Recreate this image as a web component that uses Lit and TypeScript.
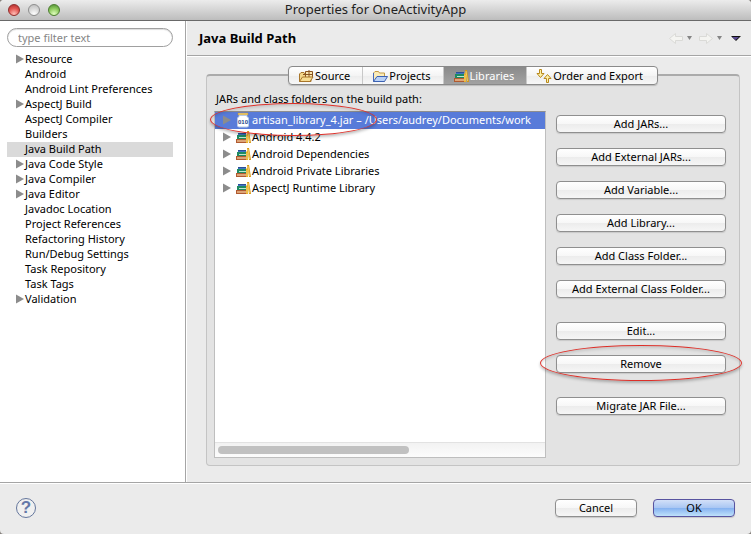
import { LitElement, html, css, svg, nothing } from "lit";
import { customElement, state } from "lit/decorators.js";
import { classMap } from "lit/directives/class-map.js";

const booksIcon = svg`
  <svg class="icon" viewBox="0 0 16 16" width="16" height="16" aria-hidden="true">
    <path d="M3 4h8v2H3z" fill="#3f74c4"/><path d="M3 4h8v1H3z" fill="#2b4f96"/>
    <path d="M2 6h9v4H2z" fill="#1f8a62"/><path d="M4 8h7v1H4z" fill="#bfe6cf"/>
    <path d="M1 10h11v4H1z" fill="#b05a30"/><path d="M2 11h9v2H2z" fill="#dca477"/>
    <path d="M12 2h2l2 12h-2z" fill="#d8980f"/>
    <path d="M11 6l2-2v10h-2z" fill="#e8b02a"/>
    <path d="M13 3l1.500 10M12 7v6" stroke="#fbe08a" stroke-width=".7" fill="none"/>
  </svg>`;

const jarIcon = svg`
  <svg class="icon" viewBox="0 0 16 16" width="16" height="16" aria-hidden="true">
    <path d="M3 1h10v2H3z" fill="#f0cf74" stroke="#b88a28" stroke-width=".5"/>
    <path d="M4 3.500h8v1l1.500 1.500v8l-1 1h-9l-1-1V6L4 4.500z" fill="#fff" stroke="#b9cbe6"/>
    <text x="8" y="12" text-anchor="middle" class="bits">010</text>
  </svg>`;

const sourceIcon = svg`
  <svg class="icon" viewBox="0 0 16 16" width="16" height="16" aria-hidden="true">
    <path d="M1.500 13.500V6l1.500-1.500h3L7 6h6v7.500z" fill="#f3d68b" stroke="#a8752a"/>
    <path d="M7.500 3.500h7v6h-7z" fill="#fbe7b0" stroke="#8a5420"/>
    <path d="M5 6.500h10M11 2v7" stroke="#8a5420" fill="none"/>
    <path d="M1.500 13.500L4.500 9h10.500l-3 4.500z" fill="#f7dc92" stroke="#a8752a"/>
  </svg>`;

const projectsIcon = svg`
  <svg class="icon" viewBox="0 0 16 16" width="16" height="16" aria-hidden="true">
    <path d="M1.500 13.500V5L3 3.500h3.500L7.500 5h5v8.500z" fill="#fbecb8" stroke="#c39a45"/>
    <path d="M1.500 13.500V5" stroke="#4568b8"/>
    <path d="M1.500 13.500L5 8.500h10.500l-3 5z" fill="#b9d1f5" stroke="#3c62b4"/>
  </svg>`;

const orderIcon = svg`
  <svg class="icon" viewBox="0 0 16 16" width="16" height="16" aria-hidden="true">
    <path d="M3.500 1.500h2v4h2.500L4.500 9.500 1 5.500h2.500z" fill="#fdf0a8" stroke="#b8891c"/>
    <path d="M12.500 14.500h-2v-4H8l3.500-4 3.500 4h-2.500z" fill="#fdf0a8" stroke="#b8891c"/>
  </svg>`;

const twisty = svg`
  <svg class="twisty" viewBox="0 0 8 10" width="8" height="10" aria-hidden="true">
    <path d="M0 0.500L8 5 0 9.500z" fill="#8c8c8c"/>
  </svg>`;

const categories: Array<[string, boolean]> = [
  ["Resource", true],
  ["Android", false],
  ["Android Lint Preferences", false],
  ["AspectJ Build", true],
  ["AspectJ Compiler", false],
  ["Builders", false],
  ["Java Build Path", false],
  ["Java Code Style", true],
  ["Java Compiler", true],
  ["Java Editor", true],
  ["Javadoc Location", false],
  ["Project References", false],
  ["Refactoring History", false],
  ["Run/Debug Settings", false],
  ["Task Repository", false],
  ["Task Tags", false],
  ["Validation", true],
];

const tabs = [
  { name: "Source", icon: sourceIcon },
  { name: "Projects", icon: projectsIcon },
  { name: "Libraries", icon: booksIcon },
  { name: "Order and Export", icon: orderIcon },
];

const entries = [
  { name: "artisan_library_4.jar – /Users/audrey/Documents/work", icon: jarIcon },
  { name: "Android 4.4.2", icon: booksIcon },
  { name: "Android Dependencies", icon: booksIcon },
  { name: "Android Private Libraries", icon: booksIcon },
  { name: "AspectJ Runtime Library", icon: booksIcon },
];

const actionGroups = [
  ["Add JARs...", "Add External JARs...", "Add Variable...", "Add Library...", "Add Class Folder...", "Add External Class Folder..."],
  ["Edit...", "Remove"],
  ["Migrate JAR File..."],
];

@customElement("app-root")
export class AppRoot extends LitElement {
  @state() private category = "Java Build Path";
  @state() private tab = "Libraries";
  @state() private entry = 0;

  static styles = css`
    :host {
      display: block;
      background: #85807c;
      font: 11px/15px "Noto Sans", "Open Sans", sans-serif;
      color: #000;
    }
    * { box-sizing: border-box; }
    button, input { font: inherit; color: inherit; margin: 0; padding: 0; }
    svg { display: block; flex: none; }
    ul { list-style: none; margin: 0; padding: 0; }

    .window {
      display: flex;
      flex-direction: column;
      min-height: 100vh;
      background: #ebebeb;
      border-radius: 4px;
      overflow: hidden;
    }
    .titlebar {
      display: grid;
      grid-template-columns: 1fr auto 1fr;
      align-items: center;
      height: 21px;
      padding: 0 8px;
      background: linear-gradient(#ececec, #bdbdbd);
      border-bottom: 1px solid #696969;
    }
    .lights { display: flex; gap: 8px; }
    .light {
      width: 12px;
      height: 12px;
      border: 1px solid #8d8d8d;
      border-radius: 50%;
      background: radial-gradient(circle at 50% 90%, #fff, #d4d4d4 60%, #bbb);
    }
    .light.close { border-color: #8f2d2b; background: radial-gradient(circle at 50% 90%, #ffc0b8, #e25550 55%, #a92b2b); }
    .light.zoom { border-color: #4b7c2f; background: radial-gradient(circle at 50% 90%, #e2ffc0, #8cc95c 55%, #4c8a33); }
    .title { margin: 0; padding-bottom: 2px; font-size: 13px; line-height: 18px; font-weight: 400; color: #222; }

    .body { display: flex; flex: 1; border-bottom: 1px solid #a5a5a5; }
    .sidebar {
      flex: none;
      width: 186px;
      padding: 7px 12px 0 7px;
      background: #fff;
      border-right: 1px solid #a5a5a5;
    }
    .filter {
      display: block;
      width: 100%;
      height: 19px;
      padding: 0 10px;
      border: 1px solid #a0a0a0;
      border-radius: 10px;
      background: #fff;
      box-shadow: inset 0 1px 1px #ddd;
    }
    .filter::placeholder { color: #858585; opacity: 1; }
    .categories { margin-top: 5px; }
    .category {
      display: flex;
      align-items: center;
      height: 15px;
      padding: 0 0 2px 9px;
      line-height: 13px;
      white-space: nowrap;
    }
    .category.selected { background: #dadada; }
    .slot { flex: none; width: 9px; }

    .page { flex: 1; min-width: 0; display: flex; flex-direction: column; border-left: 1px solid #fff; }
    .pagehead {
      display: flex;
      align-items: center;
      justify-content: space-between;
      height: 35px;
      padding: 0 10px 0 12px;
      border-bottom: 1px solid #a5a5a5;
      box-shadow: 0 1px #fff;
    }
    .pagehead h2 { margin: 0; font-size: 13px; line-height: 18px; font-weight: 700; padding-bottom: 1px; }
    .nav { display: flex; align-items: center; }
    .navbtn { display: flex; align-items: center; gap: 4px; border: 0; background: none; margin-right: 7px; }
    .navbtn.menu { margin: 0 0 0 2px; }

    .panel {
      flex: 1;
      display: flex;
      flex-direction: column;
      margin: 18px 11px 16px 19px;
      border: 1px solid #c4c4c4;
      border-top: 2px solid #ababab;
      border-radius: 4px;
      background: #e3e3e3;
      padding: 0 13px 7px 7px;
    }
    .tabs {
      align-self: center;
      display: flex;
      height: 19px;
      margin: -10px 0 0 6px;
      border: 1px solid #8a8a8a;
      border-radius: 4px;
      background: linear-gradient(#fff, #f4f4f4 50%, #ececec 51%, #f8f8f8);
      box-shadow: 0 1px 1px #bbb;
    }
    .tab {
      display: flex;
      align-items: center;
      gap: 1px;
      padding: 0 12px 0 9px;
      border: 0;
      background: none;
      line-height: 13px;
      white-space: nowrap;
    }
    .tab span { padding-bottom: 1px; }
    .tab:last-child { padding-right: 14px; }
    .tab + .tab { border-left: 1px solid #c8c8c8; }
    .tab.selected {
      background: linear-gradient(#8a8a8a, #a2a2a2);
      color: #fff;
    }

    .columns { flex: 1; display: flex; gap: 10px; margin-top: 7px; }
    .listside { flex: 1; min-width: 0; display: flex; flex-direction: column; }
    .label { line-height: 13px; height: 19px; padding-left: 2px; }
    .listwrap { flex: 1; position: relative; display: flex; flex-direction: column; }
    .list {
      flex: 1;
      display: flex;
      flex-direction: column;
      overflow: hidden;
      background: #fff;
      border: 1px solid #bebebe;
      border-top-color: #8e8e8e;
    }
    .entries { flex: 1; }
    .entry {
      display: flex;
      align-items: center;
      height: 17px;
      padding: 0 0 2px 8px;
      white-space: nowrap;
    }
    .entry .twisty { margin-right: 4px; }
    .entry .icon { margin-right: 1px; }
    .entry.selected { background: #587bd9; color: #fff; }
    .bits { font: 700 6px "Liberation Sans", sans-serif; fill: #1d3f86; }
    .track {
      height: 15px;
      padding: 3px;
      border-top: 1px solid #e2e2e2;
      background: linear-gradient(#f2f2f2, #fcfcfc);
    }
    .thumb { width: 59%; height: 8px; border-radius: 4px; background: #c1c1c1; }

    .actions {
      flex: none;
      width: 170px;
      display: flex;
      flex-direction: column;
      gap: 24px;
      padding-top: 23px;
    }
    .group { display: flex; flex-direction: column; gap: 15px; }
    .cell { position: relative; display: flex; }
    .push {
      flex: 1;
      height: 18px;
      border: 1px solid #8f8f8f;
      border-radius: 4px;
      background: linear-gradient(#fff, #f7f7f7 50%, #ececec 51%, #f6f6f6);
      box-shadow: 0 1px 1px #c8c8c8;
      line-height: 15px;
      padding-bottom: 1px;
      text-align: center;
      white-space: nowrap;
    }
    .push.primary {
      border-color: #5854a0;
      background: linear-gradient(#d3e0f8, #a9c6f3 49%, #85b1f0 51%, #bfe2fb);
    }
    .mark {
      position: absolute;
      border: 1px solid #dc2f28;
      border-radius: 50%;
      box-shadow: 0 2px 3px rgba(0, 0, 0, 0.25), inset 0 2px 3px rgba(0, 0, 0, 0.12);
      pointer-events: none;
    }
    .mark.first { left: -4px; top: -8px; width: 167px; height: 33px; }
    .mark.remove { left: -16px; right: -16px; top: -10px; bottom: -8px; }

    .footer {
      display: flex;
      align-items: center;
      gap: 16px;
      height: 51px;
      padding: 0 16px 2px;
      border-top: 1px solid #fff;
    }
    .help {
      width: 20px;
      height: 20px;
      margin-right: auto;
      border: 1px solid #64769c;
      border-radius: 50%;
      background: #f0f0f0;
      color: #6478a8;
      font: 700 17px/18px "Liberation Sans", sans-serif;
      text-align: center;
    }
    .footer .push { flex: none; width: 82px; }
  `;

  private arrow(forward: boolean) {
    const d = forward
      ? "M.5 4.500h7v-3l6 5-6 5v-3h-7z"
      : "M13.500 4.500h-7v-3l-6 5 6 5v-3h7z";
    return html`
      <button class="navbtn" aria-label=${forward ? "Forward" : "Back"}>
        <svg viewBox="0 0 14 13" width="14" height="13"><path d=${d} fill="#f4f4f1" stroke="#dadad7"/></svg>
        <svg viewBox="0 0 5 4" width="5" height="4"><path d="M0 0h5L2.500 4z" fill="#858585"/></svg>
      </button>`;
  }

  render() {
    return html`
      <div class="window">
        <header class="titlebar">
          <div class="lights">
            <button class="light close" aria-label="Close"></button>
            <button class="light" aria-label="Minimize"></button>
            <button class="light zoom" aria-label="Zoom"></button>
          </div>
          <h1 class="title">Properties for OneActivityApp</h1>
        </header>
        <div class="body">
          <nav class="sidebar">
            <input class="filter" type="text" placeholder="type filter text" aria-label="Filter" />
            <ul class="categories" role="tree">
              ${categories.map(([name, branch]) => html`
                <li role="treeitem" aria-selected=${name === this.category}
                  class=${classMap({ category: true, selected: name === this.category })}
                  @click=${() => (this.category = name)}>
                  <span class="slot">${branch ? twisty : nothing}</span>${name}
                </li>`)}
            </ul>
          </nav>
          <main class="page">
            <div class="pagehead">
              <h2>Java Build Path</h2>
              <div class="nav">
                ${this.arrow(false)}${this.arrow(true)}
                <button class="navbtn menu" aria-label="Menu">
                  <svg viewBox="0 0 10 5" width="10" height="5">
                    <path d="M0 0h10L5 5z" fill="#111"/><path d="M1 1h7L4.500 4z" fill="#5a4a92"/>
                  </svg>
                </button>
              </div>
            </div>
            <section class="panel">
              <div class="tabs" role="tablist">
                ${tabs.map((t) => html`
                  <button role="tab" aria-selected=${t.name === this.tab}
                    class=${classMap({ tab: true, selected: t.name === this.tab })}
                    @click=${() => (this.tab = t.name)}>${t.icon}<span>${t.name}</span></button>`)}
              </div>
              <div class="columns">
                <div class="listside">
                  <div class="label" id="listlabel">JARs and class folders on the build path:</div>
                  <div class="listwrap">
                    <div class="list">
                      <ul class="entries" role="tree" aria-labelledby="listlabel">
                        ${entries.map((e, i) => html`
                          <li role="treeitem" aria-selected=${i === this.entry}
                            class=${classMap({ entry: true, selected: i === this.entry })}
                            @click=${() => (this.entry = i)}>${twisty}${e.icon}<span>${e.name}</span></li>`)}
                      </ul>
                      <div class="track"><div class="thumb"></div></div>
                    </div>
                    <div class="mark first"></div>
                  </div>
                </div>
                <div class="actions">
                  ${actionGroups.map((group) => html`
                    <div class="group">
                      ${group.map((name) => html`
                        <div class="cell">
                          <button class="push">${name}</button>
                          ${name === "Remove" ? html`<div class="mark remove"></div>` : nothing}
                        </div>`)}
                    </div>`)}
                </div>
              </div>
            </section>
          </main>
        </div>
        <footer class="footer">
          <button class="help" aria-label="Help">?</button>
          <button class="push">Cancel</button>
          <button class="push primary">OK</button>
        </footer>
      </div>`;
  }
}
